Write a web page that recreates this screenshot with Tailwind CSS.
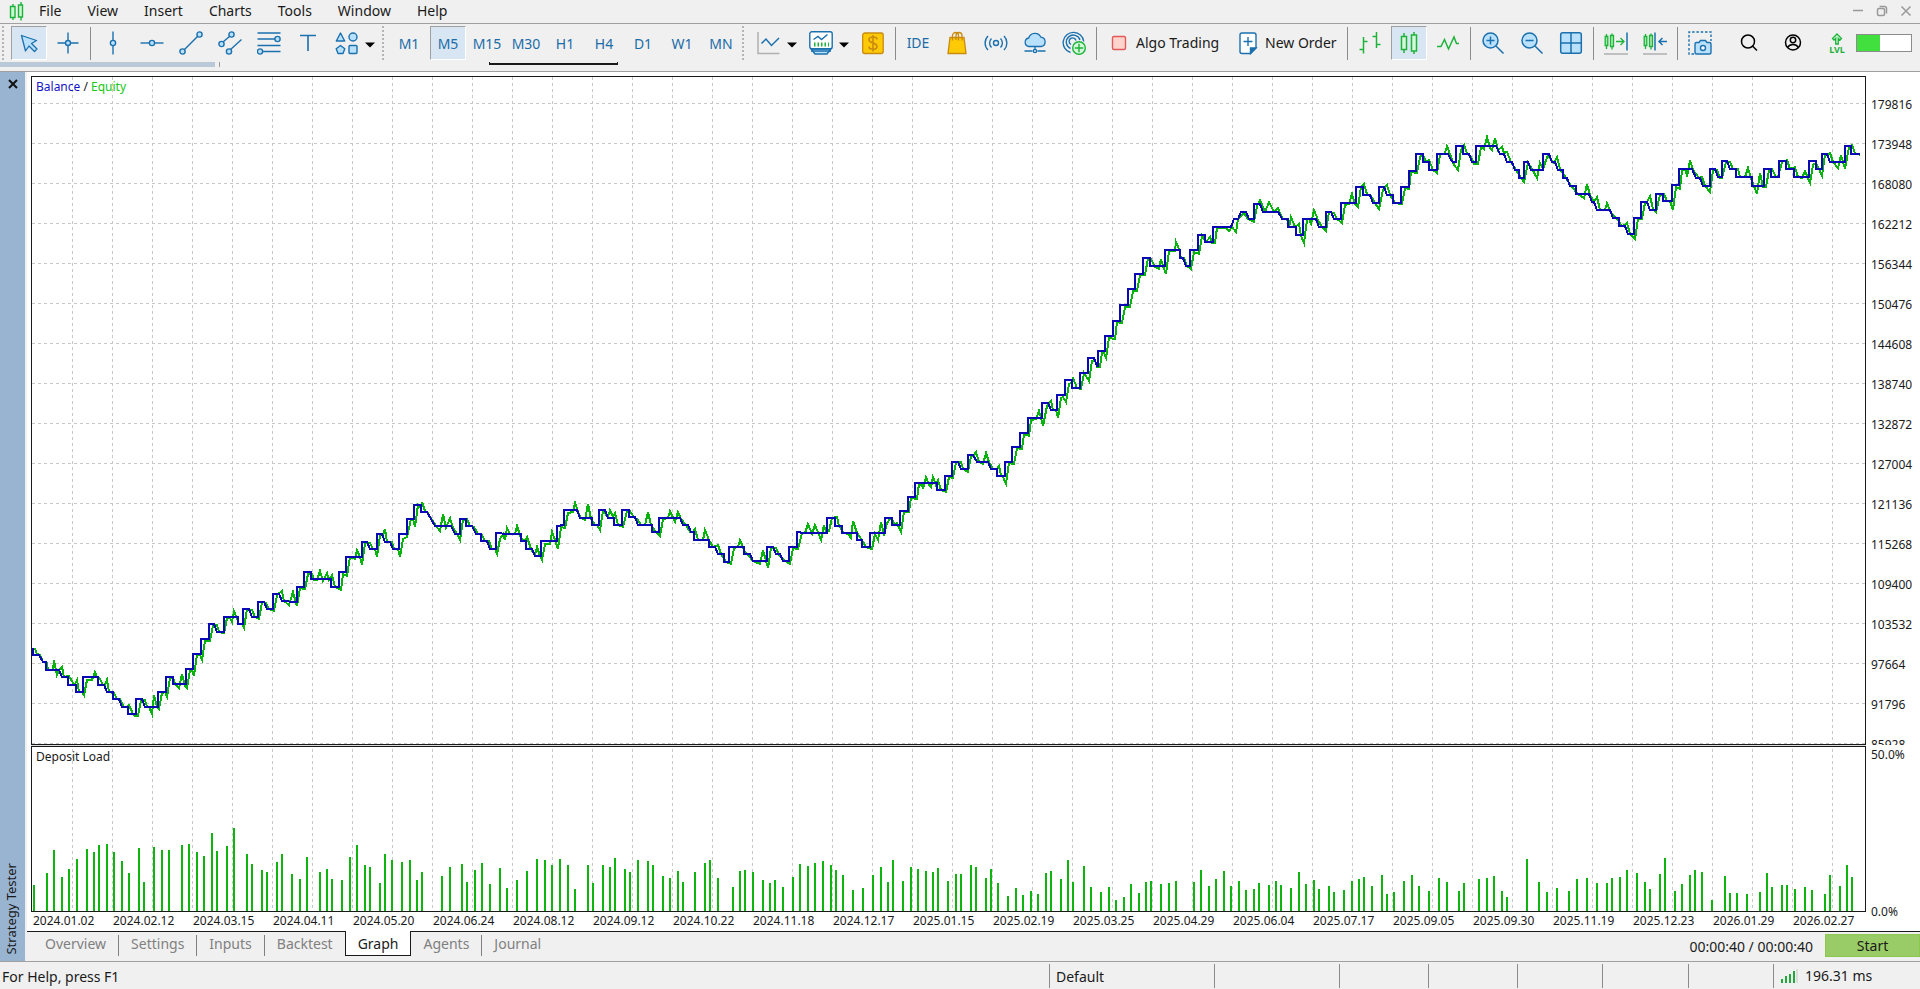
<!DOCTYPE html>
<html lang="en">
<head>
  <meta charset="UTF-8">
  <meta name="viewport" content="width=device-width, initial-scale=1.0" />
  <title>Strategy Tester</title>
  <script src="https://cdn.jsdelivr.net/npm/@tailwindcss/browser@4"></script>
</head>
<body class="bg-[#f0f0f0] text-[#1a1a1a] font-['Noto_Sans','Open_Sans',sans-serif] text-sm flex flex-col h-screen overflow-hidden">

  <!-- Menu bar -->
  <header class="flex items-center h-[23px] shrink-0">
    <svg class="w-4 h-5 ml-2 mr-[2px]" viewBox="0 0 16 20" fill="#c9f7cf" stroke="#1db33a" stroke-width="1.4"><path d="M5 2v16M13 0v18.5"/><path d="M2.5 4.5h4.5v11h-4.5zM10.5 3h4v12h-4z"/></svg>
    <nav class="flex h-full items-center leading-5 pb-[2px]">
      <button class="px-[13px]">File</button>
      <button class="px-[13px]">View</button>
      <button class="px-[13px]">Insert</button>
      <button class="px-[13px]">Charts</button>
      <button class="px-[13px]">Tools</button>
      <button class="px-[13px]">Window</button>
      <button class="px-[13px]">Help</button>
    </nav>
    <div class="ml-auto mr-1.5 pb-[2px] flex gap-2 text-[#999]">
      <button aria-label="Minimize"><svg class="w-4 h-4" viewBox="0 0 16 16" stroke="currentColor" stroke-width="1.5"><path d="M3 7.500h10"/></svg></button>
      <button aria-label="Restore"><svg class="w-4 h-4" viewBox="0 0 16 16" fill="none" stroke="currentColor" stroke-width="1.5"><rect x="3.5" y="5.5" width="7" height="7" rx="1.5"/><path d="M5.5 3.5h5a2 2 0 0 1 2 2v5"/></svg></button>
      <button aria-label="Close"><svg class="w-4 h-4" viewBox="0 0 16 16" stroke="currentColor" stroke-width="1.5"><path d="M3.5 3.5l9 9M12.5 3.5l-9 9"/></svg></button>
    </div>
  </header>

  <!-- Toolbar -->
  <div class="border-y border-[#a0a0a0] h-[49px] shrink-0 flex flex-col">
    <div class="flex items-center gap-[3px] pl-[2px] pr-2 pt-[2px] text-[#1c6ca8]">
      <div class="w-1.5 h-[34px] border-l-2 border-dotted border-[#b5b5b5]"></div>

      <button aria-label="Cursor" class="w-9 h-[34px] grid place-items-center bg-[#d8e6f3] border border-t-[#a0a0a0] border-l-[#a0a0a0] border-white"><svg class="w-6 h-6" viewBox="0 0 24 24" fill="#b9e1fd" stroke="#1b70ae" stroke-width="1.3" stroke-linejoin="round"><path d="M4.5 4.5l15 5-5 3 5.5 5.5-2.5 2.5-5.5-5.5-3.5 5z"/></svg></button>
      <button aria-label="Crosshair" class="w-9 h-[34px] grid place-items-center"><svg class="w-6 h-6" viewBox="0 0 24 24" fill="#b9e1fd" stroke="#1b70ae" stroke-width="1.4"><path d="M1.5 12h7.5M15 12h7.5M12 1.5v7.5M12 15v7.5"/><circle cx="12" cy="12" r="2.5"/></svg></button>
      <div class="w-[3px] h-[33px] flex justify-center"><div class="w-px bg-[#8c8c8c]"></div></div>
      <button aria-label="Vertical line" class="w-9 h-[34px] grid place-items-center"><svg class="w-6 h-6" viewBox="0 0 24 24" fill="#b9e1fd" stroke="#1b70ae" stroke-width="1.4"><path d="M12 .5v23"/><circle cx="12" cy="12" r="2.6"/></svg></button>
      <button aria-label="Horizontal line" class="w-9 h-[34px] grid place-items-center"><svg class="w-6 h-6" viewBox="0 0 24 24" fill="#b9e1fd" stroke="#1b70ae" stroke-width="1.4"><path d="M.5 12h23"/><circle cx="12" cy="12" r="2.6"/></svg></button>
      <button aria-label="Trend line" class="w-9 h-[34px] grid place-items-center"><svg class="w-6 h-6" viewBox="0 0 24 24" fill="#b9e1fd" stroke="#1b70ae" stroke-width="1.4"><path d="M5 19L19 5"/><circle cx="3.5" cy="20.5" r="2.6"/><circle cx="20.5" cy="3.5" r="2.6"/></svg></button>
      <button aria-label="Channel" class="w-9 h-[34px] grid place-items-center"><svg class="w-6 h-6" viewBox="0 0 24 24" fill="#b9e1fd" stroke="#1b70ae" stroke-width="1.4"><path d="M5 11l7-6M12 19L23.5 8.5"/><circle cx="3.5" cy="13" r="2.6"/><circle cx="13.5" cy="3.5" r="2.6"/><circle cx="11" cy="20.5" r="2.6"/></svg></button>
      <button aria-label="Fibonacci" class="w-9 h-[34px] grid place-items-center"><svg class="w-6 h-6" viewBox="0 0 24 24" fill="#b9e1fd" stroke="#1b70ae" stroke-width="1.4"><path d="M.5 2h23M.5 8h18M.5 14.5h23M5 20.5h18.5"/><circle cx="20.5" cy="8" r="2.6"/><circle cx="3" cy="20.5" r="2.6"/></svg></button>
      <button aria-label="Text" class="w-9 h-[34px] grid place-items-center"><svg class="w-6 h-6" viewBox="0 0 24 24" fill="none" stroke="#1b70ae" stroke-width="1.6"><path d="M4 4.5h16M12 4.5V20"/></svg></button>
      <button aria-label="Shapes" class="w-[50px] h-[34px] flex items-center gap-1.5 pl-1.5"><svg class="w-6 h-6" viewBox="0 0 24 24" fill="#b9e1fd" stroke="#1b70ae" stroke-width="1.4" stroke-linejoin="round"><path d="M5.5 2l4.2 8H1.3z"/><circle cx="18" cy="6" r="4"/><path d="M5.5 14.5l4.3 3.3-1.8 4.700H3l-1.800-4.700z"/><rect x="14" y="14.5" width="8" height="8" rx="1"/></svg><svg class="w-[10px] h-[10px] mt-1" viewBox="0 0 10 10" fill="#000"><path d="M0 2.500h10L5 7.500z"/></svg></button>
      <div class="w-1.5 h-[34px] border-l-2 border-dotted border-[#b5b5b5]"></div>

      <!-- Timeframes -->
      <button class="w-9 h-[34px] pt-[2px]">M1</button>
      <button class="w-9 h-[34px] pt-[2px] bg-[#d8e6f3] border border-t-[#a0a0a0] border-l-[#a0a0a0] border-white">M5</button>
      <button class="w-9 h-[34px] pt-[2px]">M15</button>
      <button class="w-9 h-[34px] pt-[2px]">M30</button>
      <button class="w-9 h-[34px] pt-[2px]">H1</button>
      <button class="w-9 h-[34px] pt-[2px]">H4</button>
      <button class="w-9 h-[34px] pt-[2px]">D1</button>
      <button class="w-9 h-[34px] pt-[2px]">W1</button>
      <button class="w-9 h-[34px] pt-[2px]">MN</button>
      <div class="w-1.5 h-[34px] border-l-2 border-dotted border-[#b5b5b5]"></div>

      <button aria-label="Chart type" class="w-[49px] h-[34px] flex items-center gap-1.5 pl-1.5"><svg class="w-6 h-6" viewBox="0 0 24 24" fill="none" stroke-width="1.5"><path stroke="#b0b0b0" d="M1 1v21.5h21.5"/><path stroke="#1b70ae" d="M4.5 12.5l4.5-4.5 5.5 6.500 7.500-7.500"/></svg><svg class="w-[10px] h-[10px] mt-1" viewBox="0 0 10 10" fill="#000"><path d="M0 2.500h10L5 7.500z"/></svg></button>
      <button aria-label="Indicators" class="w-[49px] h-[34px] flex items-center gap-1.5 pl-1.5"><svg class="w-6 h-6" viewBox="0 0 24 24" fill="none" stroke="#1b70ae" stroke-width="1.4"><path fill="#b9e1fd" d="M2 18h20l-4 5H6z"/><rect x=".8" y=".8" width="22.4" height="17" rx="2" fill="#fff"/><path d="M2 20h20M4.5 8.5L9 5.5l3.5 3 6-5"/><path stroke="#1db33a" stroke-dasharray="1.5 2" stroke-width="4" d="M5 13.500h15"/></svg><svg class="w-[10px] h-[10px] mt-1" viewBox="0 0 10 10" fill="#000"><path d="M0 2.500h10L5 7.500z"/></svg></button>
      <button aria-label="Deposit" class="w-9 h-[34px] grid place-items-center"><svg class="w-6 h-6" viewBox="0 0 24 24" fill="none" stroke="#c98a10" stroke-width="1.3"><rect x="1.7" y="2" width="20.5" height="20.5" rx="2" fill="#fdca05"/><path stroke-width="1.6" d="M16 8.5c0-1.500-1.700-2.500-4-2.500s-4 1-4 2.800c0 4 8 2.600 8 6.600 0 1.800-1.700 2.800-4 2.800s-4-1-4-2.700M12 4v16.500"/></svg></button>
      <div class="w-[3px] h-[33px] flex justify-center"><div class="w-px bg-[#8c8c8c]"></div></div>

      <button class="w-9 h-[34px]">IDE</button>
      <button aria-label="Market" class="w-9 h-[34px] grid place-items-center"><svg class="w-6 h-6" viewBox="0 0 24 24" fill="#fdca05" stroke="#c98a10" stroke-width="1.3"><path d="M5 6.500h14l2 16H3z"/><path fill="none" d="M7.500 9.500V4.500a3 3 0 0 1 6 0v5M11 9V4.500a3 3 0 0 1 6 0v5"/></svg></button>
      <button aria-label="Signals" class="w-9 h-[34px] grid place-items-center"><svg class="w-6 h-6" viewBox="0 0 24 24" fill="none" stroke="#1b70ae" stroke-width="1.4"><circle cx="12" cy="12" r="2.5"/><path d="M7.500 7.500a6.300 6.300 0 0 0 0 9M16.500 7.500a6.300 6.300 0 0 1 0 9M4 5a9.900 9.900 0 0 0 0 14M20 5a9.900 9.900 0 0 1 0 14"/></svg></button>
      <button aria-label="VPS" class="w-9 h-[34px] grid place-items-center"><svg class="w-6 h-6" viewBox="0 0 24 24" fill="#b9e1fd" stroke="#1b70ae" stroke-width="1.3"><path d="M6 15.500a4.300 4.300 0 0 1-.3-8.500 6.500 6.500 0 0 1 12.200-.8 4.700 4.700 0 0 1 .3 9.300zM12 15.500v3M1.500 20h8M14.500 20h8"/><circle cx="12" cy="20" r="1.7"/></svg></button>
      <button aria-label="Community" class="w-9 h-[34px] grid place-items-center"><svg class="w-6 h-6" viewBox="0 0 24 24" fill="none" stroke="#1b70ae" stroke-width="1.4"><path d="M8.500 21.500a10.300 10.300 0 1 1 13.200-11M8.500 17.500a7 7 0 1 1 9.500-8.500M9 13.500a3.500 3.500 0 1 1 5-4"/><circle cx="17" cy="17" r="6.3" fill="#d3f9d8" stroke="#1db33a"/><path stroke="#1db33a" d="M17 12.800v8.400M12.800 17h8.400"/></svg></button>
      <div class="w-[3px] h-[33px] flex justify-center"><div class="w-px bg-[#8c8c8c]"></div></div>

      <button class="w-[127px] h-[34px] flex items-center gap-[5px] pl-1.5 text-[#1a1a1a] whitespace-nowrap"><svg class="w-6 h-6" viewBox="0 0 24 24"><rect x="5.5" y="5.5" width="13" height="13" rx="1.5" fill="#ffd4cc" stroke="#e05a5a" stroke-width="1.4"/></svg>Algo Trading</button>
      <button class="w-[112px] h-[34px] flex items-center gap-[5px] pl-[5px] text-[#1a1a1a] whitespace-nowrap"><svg class="w-6 h-6" viewBox="0 0 24 24" fill="none" stroke="#1b70ae" stroke-width="1.4"><path fill="#fff" d="M6 2h12a2 2 0 0 1 2 2v13l-5.500 5.500H6a2 2 0 0 1-2-2V4a2 2 0 0 1 2-2z"/><path fill="#1b70ae" d="M20 17h-5.500v5.500z"/><path d="M12 6v9M7.500 10.500h9"/></svg>New Order</button>
      <div class="w-[3px] h-[33px] flex justify-center"><div class="w-px bg-[#8c8c8c]"></div></div>

      <button aria-label="Bars" class="w-9 h-[34px] grid place-items-center"><svg class="w-6 h-6" viewBox="0 0 24 24" fill="none" stroke="#1db33a" stroke-width="1.5"><path d="M5.500 6v16.500M1.500 18.500h4M5.500 10.500h4M18.500 1v16M14.500 5.500h4M18.500 13.500h4"/></svg></button>
      <button aria-label="Candles" class="w-9 h-[34px] grid place-items-center bg-[#d8e6f3] border border-t-[#a0a0a0] border-l-[#a0a0a0] border-white"><svg class="w-6 h-6" viewBox="0 0 24 24" fill="#d3f9d8" stroke="#1db33a" stroke-width="1.5"><path d="M7 2v20M17 1v22"/><path d="M4.500 5.500h5v13h-5zM14.500 4h5v16h-5z"/></svg></button>
      <button aria-label="Line" class="w-9 h-[34px] grid place-items-center"><svg class="w-6 h-6" viewBox="0 0 24 24" fill="none" stroke="#1db33a" stroke-width="1.5"><path d="M1 15.500h4l3.500-7 4 9.500 5.500-12 2.500 6.500h2.500"/></svg></button>
      <div class="w-[3px] h-[33px] flex justify-center"><div class="w-px bg-[#8c8c8c]"></div></div>

      <button aria-label="Zoom in" class="w-9 h-[34px] grid place-items-center"><svg class="w-6 h-6" viewBox="0 0 24 24" fill="#b9e1fd" stroke="#1b70ae" stroke-width="1.5"><circle cx="9.5" cy="9.5" r="7.5"/><path d="M15 15l7.500 7.500M9.500 5.500v8M5.500 9.500h8"/></svg></button>
      <button aria-label="Zoom out" class="w-9 h-[34px] grid place-items-center"><svg class="w-6 h-6" viewBox="0 0 24 24" fill="#b9e1fd" stroke="#1b70ae" stroke-width="1.5"><circle cx="9.5" cy="9.5" r="7.5"/><path d="M15 15l7.500 7.500M5.500 9.500h8"/></svg></button>
      <button aria-label="Tile windows" class="w-9 h-[34px] grid place-items-center"><svg class="w-6 h-6" viewBox="0 0 24 24" fill="#b9e1fd" stroke="#1b70ae" stroke-width="1.5"><rect x="1.7" y="1.7" width="20.6" height="20.6" rx="2"/><path d="M12 2v20.500M2 12h20.500"/></svg></button>
      <div class="w-[3px] h-[33px] flex justify-center"><div class="w-px bg-[#8c8c8c]"></div></div>

      <button aria-label="Chart shift" class="w-9 h-[34px] grid place-items-center"><svg class="w-6 h-6" viewBox="0 0 24 24" fill="#9feaa9" stroke="#1db33a" stroke-width="1.3"><path d="M2.500 3v15M8 2.500v16"/><path d="M1.200 5.500h2.600v9H1.200zM6.500 4.500h3v11h-3z"/><path fill="none" d="M12 10.500h8M16.500 7l3.500 3.500-3.500 3.500"/><path stroke="#1b70ae" stroke-width="1.5" d="M23 1.500v18"/><path stroke="#a5a5a5" d="M0 23h24"/></svg></button>
      <button aria-label="Auto scroll" class="w-9 h-[34px] grid place-items-center"><svg class="w-6 h-6" viewBox="0 0 24 24" fill="#9feaa9" stroke="#1db33a" stroke-width="1.3"><path d="M2.500 3v15M8 2.500v16"/><path d="M1.200 5.500h2.600v9H1.200zM6.500 4.500h3v11h-3z"/><path fill="none" stroke="#1b70ae" stroke-width="1.5" d="M12 1.500v18M24 10.500h-8M19.500 7L16 10.500l3.500 3.500"/><path stroke="#a5a5a5" d="M0 23h24"/></svg></button>
      <div class="w-[3px] h-[33px] flex justify-center"><div class="w-px bg-[#8c8c8c]"></div></div>
      <button aria-label="Screenshot" class="w-9 h-[34px] grid place-items-center"><svg class="w-6 h-6" viewBox="0 0 24 24" fill="none" stroke="#1b70ae" stroke-width="1.4"><path stroke-dasharray="2.5 1.8" d="M6 23H1V1h22v9"/><path fill="#b9e1fd" d="M7 13a1.500 1.500 0 0 1 1.500-1.500H11l1.500-2h5l1.500 2h2.500A1.500 1.500 0 0 1 23 13v8.500a1.500 1.500 0 0 1-1.500 1.500h-13A1.500 1.500 0 0 1 7 21.500z"/><circle cx="15" cy="17" r="2.5" fill="#fff"/></svg></button>

      <div class="ml-auto flex items-center gap-2 text-black">
        <button aria-label="Search" class="w-9 h-[34px] grid place-items-center"><svg class="w-6 h-6" viewBox="0 0 24 24" fill="none" stroke="currentColor" stroke-width="1.5"><circle cx="11" cy="10.5" r="6.5"/><path d="M15.500 15l4.500 4.500"/></svg></button>
        <button aria-label="Account" class="w-9 h-[34px] grid place-items-center"><svg class="w-6 h-6" viewBox="0 0 24 24" fill="none" stroke="currentColor" stroke-width="1.5"><circle cx="12" cy="11.5" r="7.5"/><circle cx="12" cy="9" r="2.7"/><path d="M6.500 16.500c1.200-2 3-3 5.500-3s4.300 1 5.500 3"/></svg></button>
        <div class="flex items-center gap-px">
          <button aria-label="Level" class="w-9 h-[34px] flex flex-col items-center justify-center text-[#1db33a] text-[9px] leading-[9px] font-bold"><svg class="w-3 h-3" viewBox="0 0 12 12" fill="#c9f7cf" stroke="currentColor" stroke-width="1.3"><path d="M6 1l4.500 4.500L9 7 7.300 5.500V11H4.700V5.500L3 7 1.500 5.500z"/></svg>LVL</button>
          <div class="w-14 h-[18px] border border-[#8c8c8c] bg-white"><div class="h-full bg-[#41e03f]" style="width: 42%"></div></div>
        </div>
      </div>
    </div>
    <!-- Docked bar edges under the toolbar -->
    <div class="flex h-[5px] mt-[2px]">
      <div class="w-[215px] bg-[#bac9d8]"></div>
      <div class="ml-1 w-px bg-[#999]"></div>
      <div class="ml-[269px] w-[129px] h-[3px] border-b-2 border-x border-[#1a1a1a]"></div>
    </div>
  </div>

  <!-- Strategy tester -->
  <main class="flex flex-1 min-h-0">
    <aside class="w-[25px] shrink-0 bg-[#99b4d1] flex flex-col items-center justify-between pt-1.5 pb-1.5">
      <button aria-label="Close panel"><svg class="w-3 h-3" viewBox="0 0 12 12" stroke="#111" stroke-width="2"><path d="M2 2l8 8M10 2l-8 8"/></svg></button>
      <span class="[writing-mode:vertical-rl] rotate-180 text-[13px] leading-5 mr-1">Strategy Tester</span>
    </aside>

    <section class="flex-1 min-w-0 ml-[2px] flex flex-col">
      <div class="flex-1 min-h-0 bg-white pt-1 pl-1 flex flex-col">
        <div class="flex flex-[669] min-h-0">
          <div class="relative flex-1 border border-[#1a1a1a] min-w-0">
            <svg class="block w-full h-full" viewBox="32 77 1833 667" preserveAspectRatio="none" fill="none" shape-rendering="crispEdges">
              <g id="grid-top" stroke="#c8c8c8" stroke-dasharray="3 3"></g>
              <polyline id="equity" stroke="#06b40c" stroke-width="2"/>
              <polyline id="balance" stroke="#0a0ab4" stroke-width="2"/>
            </svg>
            <div class="absolute left-1 top-0 text-xs leading-5"><span class="text-[#1414c8]">Balance</span> / <span class="text-[#14c814]">Equity</span></div>
          </div>
          <div id="prices" class="w-[54px] pt-[9px] pl-[5px] text-xs overflow-hidden"></div>
        </div>
        <div class="flex h-px"><div class="flex-1 bg-[#dcdcdc]"></div><div class="w-[54px]"></div></div>
        <div class="flex flex-[166] min-h-0">
          <div class="relative flex-1 border border-[#1a1a1a] min-w-0">
            <svg class="block w-full h-full" viewBox="32 747 1833 164" preserveAspectRatio="none" fill="none" shape-rendering="crispEdges">
              <g id="grid-bottom" stroke="#c8c8c8" stroke-dasharray="3 3"></g>
              <path id="load" stroke="#0cb60c" stroke-width="2"/>
            </svg>
            <div class="absolute left-1 top-0 text-xs leading-5">Deposit Load</div>
          </div>
          <div class="w-[54px] pl-[5px] pt-px flex flex-col justify-between text-xs leading-4">
            <span>50.0%</span>
            <span class="-mb-2">0.0%</span>
          </div>
        </div>
        <div id="dates" class="flex h-[19px] shrink-0 mr-[54px] pl-[2px] text-xs leading-[18px] overflow-hidden"></div>
      </div>

      <div class="flex h-[30px] shrink-0 border-t border-[#1a1a1a] text-[#808080]">
        <nav class="flex items-start pl-1.5 -mt-px">
          <a href="#" class="px-3 mt-1 h-[21px] leading-[18px] border-r border-[#808080]">Overview</a>
          <a href="#" class="px-3 mt-1 h-[21px] leading-[18px] border-r border-[#808080]">Settings</a>
          <a href="#" class="px-3 mt-1 h-[21px] leading-[18px] border-r border-[#808080]">Inputs</a>
          <a href="#" class="px-3 mt-1 h-[21px] leading-[18px]">Backtest</a>
          <a href="#" class="px-3 pt-1 h-[25px] leading-[18px] bg-white border border-t-0 border-[#1a1a1a] text-[#1a1a1a]">Graph</a>
          <a href="#" class="px-3 mt-1 h-[21px] leading-[18px] border-r border-[#808080]">Agents</a>
          <a href="#" class="px-3 mt-1 h-[21px] leading-[18px]">Journal</a>
        </nav>
        <div class="ml-auto flex items-center gap-3 text-[#1a1a1a]">
          <span>00:00:40 / 00:00:40</span>
          <button class="w-[95px] h-[23px] mb-[2px] bg-[#99cc66] border border-[#8cc850] leading-5">Start</button>
        </div>
      </div>
    </section>
  </main>

  <!-- Status bar -->
  <footer class="flex h-7 shrink-0 border-t border-[#a0a0a0] pt-[2px] pb-px leading-[26px]">
    <div class="flex-1 pl-[2px]">For Help, press F1</div>
    <div class="w-[165px] border-l border-[#8c8c8c] pl-1.5">Default</div>
    <div class="w-[125px] border-l border-[#8c8c8c]"></div>
    <div class="w-[89px] border-l border-[#8c8c8c]"></div>
    <div class="w-[89px] border-l border-[#8c8c8c]"></div>
    <div class="w-[85px] border-l border-[#8c8c8c]"></div>
    <div class="w-[86px] border-l border-[#8c8c8c]"></div>
    <div class="w-[85px] border-l border-[#8c8c8c]"></div>
    <div class="w-[147px] border-l border-[#8c8c8c] pl-1.5 flex items-center gap-[7px]">
      <svg class="w-[18px] h-4" viewBox="0 0 18 16" stroke="#1fa83c" stroke-width="2"><path d="M2 15v-4M6 15V8M10 15V6M14 15V3"/><path stroke="#dcdcdc" d="M17 15V1"/></svg>
      196.31 ms
    </div>
  </footer>

  <script>
    // Curve pieces: each one has its origin and the number of units per pixel
    const balance = [
      { x: 30, y: 480, ux: 3, uy: 3, pts: "5,507 12,525 26,525 38,546 44,546 52,570 88,570 97,591 112,591 118,615 134,615 142,637 157,637 163,591 200,591 208,615 222,615 232,637 246,637 252,657 268,657 277,681 292,681 298,702 314,702 322,657 337,657 344,681 382,681 388,637 404,637 412,591 427,591 433,612 464,612 472,567 487,567 493,522 509,522 517,477 533,477 538,432 553,432 562,456 578,456 584,411 620,411 628,432 637,432 643,387 657,387 667,411 682,411 688,366 703,366 712,387 727,387 733,342 748,342 757,364 797,366 802,321 817,321 826,276 841,276 847,297 901,297 907,321 922,321 931,276 946,276 952,231 992,231 998,186 1012,186 1021,207 1036,207 1043,162 1057,162 1066,186 1080,186 1088,207 1103,207 1111,162 1126,162 1133,117 1146,117 1157,75 1171,75 1177,96 1190,96 1216,138 1264,138 1276,162 1284,162 1292,117 1306,117 1312,138 1326,138 1337,162 1347,162" },
      { x: 480, y: 460, ux: 3, uy: 3, pts: "0,222 6,243 22,243 31,267 46,267 52,219 64,219 68,222 121,222 126,243 136,243 141,267 156,267 165,288 181,288 187,243 226,243 235,198 250,195 256,150 292,150 300,175 332,175 340,195 355,195 361,150 375,150 384,175 398,175 405,195 421,195 430,150 444,150 450,171 466,172 475,195 512,195 519,216 534,216 541,175 601,175 609,195 625,195 632,216 640,216 646,240 684,240 691,261 706,261 714,283 729,283 736,306 745,306 750,261 788,261 795,282 810,282 819,303 857,303 865,261 880,261 888,282 901,282 909,303 925,303 931,261 946,261 955,216 970,219 1039,219 1045,175 1061,175 1068,198 1084,198 1090,219 1127,219 1135,240 1143,240 1150,261 1166,261 1173,219 1210,219 1218,175 1233,175 1240,195 1256,195 1264,153 1280,153 1286,111 1300,111 1309,69 1368,69 1375,90 1390,90" },
      { x: 900, y: 230, ux: 3, uy: 3, pts: "138,738 154,738 160,696 175,696 183,717 200,717 206,675 220,675 230,696 265,696 274,717 289,717 295,738 310,738 319,696 334,696 340,651 355,651 363,609 380,609 385,564 424,564 430,519 445,519 453,540 469,540 475,495 491,495 499,450 513,450 520,474 538,474 544,429 559,429 567,384 582,384 590,408 598,363 612,363 619,318 634,318 643,273 657,273 664,225 680,225 688,177 703,177 709,132 724,132 733,84 747,84 754,108 792,108 799,60 837,60 844,84 850,84 858,108 868,108 874,60 889,60 897,15 912,15 919,36 935,36" },
      { x: 0, y: 0, ux: 1, uy: 1, pts: "1214,227 1231,227 1234,219 1238,219 1241,212 1246,212 1249,219 1253,219 1255,204 1260,204 1263,212 1278,212" },
      { x: 1280, y: 110, ux: 2.45, uy: 3, pts: "0,315 4,327 16,327 22,351 36,351 42,375 52,375 59,327 88,327 95,351 108,351 115,306 126,306 132,327 146,327 153,279 182,279 190,231 202,231 206,255 220,255 227,279 238,279 245,231 256,231 263,255 274,255 280,279 293,279 300,231 313,231 318,183 330,183 336,132 347,132 353,156 362,156 367,180 379,180 386,132 412,132 420,150 424,156 429,156 434,108 446,108 452,132 462,132 470,156 476,156 484,108 530,108 538,132 549,132 556,156 568,156 575,180 582,180 587,204 594,204 600,156 608,156 614,180 642,180 648,132 658,132 666,156 674,156 680,180 690,180 696,204 702,204 710,228 722,228 728,252 756,252 764,276 770,276 777,300 808,300 815,324 827,324 834,348 846,348 852,372 863,372 870,324 882,324 887,276 899,276 906,300 919,300 924,252 936,252 942,273 956,273 962,225 974,225 981,177 1010,177 1018,204 1030,204 1036,228 1048,228 1055,177 1066,177 1074,201 1080,201 1084,153 1096,153 1102,177 1114,177 1120,201 1151,201 1158,228 1181,228 1189,177 1200,177 1206,201 1219,201 1226,153 1238,153 1243,177 1256,177 1262,201 1291,201 1299,153 1310,153 1316,177 1324,177 1330,132 1341,132 1348,156 1379,156 1386,108 1397,108 1402,132 1422,132" }
    ];
    const equity = [
      { x: 30, y: 480, ux: 3, uy: 3, pts: "5,507 14,507 20,522 30,525 40,546 50,548 55,570 68,570 73,540 82,585 88,570 96,560 102,591 118,588 128,610 136,612 142,600 148,637 155,637 162,645 170,600 186,600 194,575 200,591 210,597 218,615 224,615 232,600 238,637 252,640 262,657 270,657 282,681 292,681 298,675 308,702 316,708 323,708 332,660 344,660 350,681 358,681 367,702 373,645 380,681 388,687 396,640 404,637 411,650 420,594 430,595 436,612 447,624 456,582 464,618 472,624 480,570 487,570 493,587 502,525 510,525 516,540 524,483 540,483 548,435 560,435 566,456 583,460 592,414 600,414 607,426 613,393 628,432 636,432 643,444 652,388 666,390 676,411 688,417 697,366 708,370 718,387 733,393 742,346 757,333 762,362 778,375 788,336 797,370 802,378 811,324 826,328 834,282 846,282 852,300 862,300 871,272 880,303 892,280 898,300 907,285 914,321 932,330 940,282 952,288 961,231 976,236 982,210 990,231 997,254 1006,188 1020,188 1028,207 1036,207 1042,232 1050,165 1058,165 1066,147 1072,186 1086,186 1092,207 1103,207 1111,232 1120,178 1132,170 1142,118 1150,118 1156,141 1165,76 1172,84 1177,66 1184,92 1192,96 1218,138 1230,152 1238,102 1248,145 1260,114 1268,145 1282,162 1291,180 1300,120 1312,118 1320,138 1332,140 1345,162" },
      { x: 480, y: 460, ux: 3, uy: 3, pts: "6,225 14,243 26,243 36,267 46,267 52,283 60,237 70,222 76,240 82,204 90,222 105,222 112,198 122,235 136,243 142,231 152,267 165,285 172,261 180,288 187,300 195,252 210,252 217,216 226,240 235,267 242,200 256,204 265,160 280,156 286,130 300,172 315,180 325,133 334,178 345,195 352,195 360,210 370,153 384,170 391,150 398,172 406,160 414,195 430,202 440,152 450,152 458,168 474,180 484,195 495,195 505,156 514,195 526,214 541,228 550,178 564,174 571,153 585,186 595,156 604,178 618,195 630,216 640,216 646,207 655,240 668,240 676,210 688,240 700,261 714,255 722,283 738,306 752,312 762,264 775,261 781,240 795,276 805,284 820,303 840,312 850,270 865,324 874,264 888,265 898,284 914,303 930,312 940,264 955,267 965,220 976,219 985,192 996,222 1006,195 1023,240 1031,195 1039,216 1046,214 1056,174 1070,171 1078,197 1092,219 1105,222 1114,234 1120,183 1130,219 1145,240 1158,261 1175,267 1184,221 1194,240 1204,186 1213,222 1222,190 1234,175 1244,195 1252,190 1264,216 1273,156 1286,156" },
      { x: 900, y: 230, ux: 3, uy: 3, pts: "34,805 50,807 58,762 66,765 70,778 79,741 86,765 93,771 100,741 108,765 115,750 124,780 138,786 146,740 160,744 168,696 183,696 190,717 205,726 214,680 222,676 229,666 238,696 250,702 259,669 268,696 280,716 290,717 296,708 302,735 310,742 319,762 326,700 342,702 350,654 366,656 372,612 386,618 394,570 408,568 416,543 424,564 430,588 440,528 454,513 460,540 468,540 475,564 484,505 490,500 499,516 506,462 514,458 520,444 530,474 544,476 553,430 568,453 576,393 584,390 590,412 600,412 606,370 613,370 619,384 628,324 644,326 652,276 666,279 674,230 690,230 698,184 711,182 720,135 735,134 744,85 754,86 764,110 776,118 784,87 790,108 799,132 808,64 824,64 829,37 836,58 844,84 852,84 862,108 874,118 883,66 898,72 907,18 919,36 929,22 936,40 946,40 951,-5" },
      { x: 0, y: 0, ux: 1, uy: 1, pts: "1217,228 1226,228 1229,231 1232,227 1236,232 1238,219 1244,213 1248,219 1254,222 1257,206 1260,200 1265,212 1269,202 1274,212 1278,208" },
      { x: 1280, y: 110, ux: 2.45, uy: 3, pts: "0,309 8,327 16,327 22,354 27,320 36,351 47,342 52,378 60,400 66,330 72,328 76,342 84,300 92,330 104,351 113,362 121,306 133,308 140,327 152,338 159,285 170,282 177,252 183,282 190,290 198,232 207,222 214,252 222,258 232,279 243,298 252,240 262,225 270,255 282,279 298,282 306,235 316,236 322,186 336,188 342,140 350,136 357,156 366,150 374,180 384,190 392,135 404,130 410,108 416,132 426,165 435,180 444,120 451,105 458,130 468,140 476,162 484,162 492,112 500,118 508,80 514,115 520,120 526,84 534,120 544,112 550,130 557,126 565,156 578,180 590,204 598,216 608,158 618,178 630,205 636,160 644,178 650,160 656,136 664,150 672,160 679,141 686,178 700,205 714,228 730,252 744,264 753,222 760,255 770,276 777,262 785,300 796,300 802,279 812,308 826,327 838,348 846,345 851,340 858,372 870,387 878,326 888,326 895,280 900,276 907,258 914,298 922,306 930,255 942,252 948,273 956,273 962,300 970,232 980,237 986,180 994,180 998,201 1005,150 1012,180 1026,204 1033,200 1042,228 1054,246 1062,180 1070,180 1078,205 1084,205 1092,155 1102,155 1110,177 1122,178 1128,201 1140,201 1146,174 1154,205 1162,228 1169,252 1177,190 1184,230 1190,230 1197,180 1206,178 1214,201 1220,201 1230,156 1243,150 1250,177 1262,172 1270,201 1278,205 1286,182 1298,218 1306,165 1312,160 1320,178 1328,198 1336,136 1348,128 1354,155 1366,175 1374,136 1385,178 1394,110 1402,106 1408,130 1422,135" }
    ];
    // Deposit load bars: position and top of each bar
    const load = [
      { x: 0, y: 720, ux: 2.45, uy: 3, pts: "83,495 115,459 132,390 152,471 169,447 188,417 213,387 230,396 242,375 262,372 279,396 298,423 316,459 340,384 352,486 377,381 396,390 414,390 445,375 463,372 482,396 499,408 519,339 531,393 556,378 573,324 605,402 617,432 641,450 655,456 678,426 690,402 715,462 735,477 752,411 784,456 801,447 813,477 837,480 857,411 874,375 894,435 906,441 931,489 943,402 960,420 984,426 1004,420 1021,480 1033,456 1082,468 1102,441 1131,432 1144,486 1163,450 1180,429 1200,492 1225,444 1242,504 1266,480 1291,453 1315,417 1335,420 1352,435 1371,417 1391,435 1408,507 1440,435 1452,489 1477,435 1494,441 1506,414 1531,447 1543,456 1563,420" },
      { x: 640, y: 820, ux: 2.45, uy: 3, pts: "19,123 31,135 56,168 73,174 93,153 105,186 134,156 159,129 171,120 191,174 227,201 245,153 257,150 276,156 301,180 318,189 330,180 350,201 374,171 391,132 411,138 428,129 448,123 467,135 480,150 497,165 521,210 546,204 570,165 590,141 607,186 619,120 644,183 663,141 681,147 700,153 717,156 730,144 754,183 774,162 786,162 810,135 823,141 847,174 859,147 877,189 901,228 921,204 938,225 957,213 975,222 994,159 1006,153 1031,177 1048,120 1060,186 1087,138 1104,201 1129,216 1149,201 1166,240 1185,231 1202,192 1222,219 1239,186 1251,183 1276,192 1295,189 1313,183 1357,186 1374,150 1393,198 1411,177 1430,153 1447,198 1467,183 1484,210 1504,207 1516,189 1540,195 1558,183" },
      { x: 1280, y: 720, ux: 2.45, uy: 3, pts: "2,495 26,504 46,456 63,492 83,480 95,507 120,498 132,516 156,510 176,483 193,477 205,471 225,498 249,465 262,522 279,516 303,483 323,465 340,498 365,513 389,474 409,486 438,513 450,489 487,477 507,474 524,468 543,513 556,531 605,417 634,486 654,516 678,504 708,513 727,477 752,474 776,489 801,489 813,474 832,471 850,450 874,459 894,486 906,507 931,462 943,414 967,513 984,492 1004,465 1016,450 1033,456 1058,540 1090,468 1102,519 1119,519 1144,522 1176,516 1193,459 1205,501 1229,495 1242,495 1261,507 1286,501 1303,510 1335,522 1347,465 1371,498 1389,435 1401,471" }
    ];
    const dates = ["2024.01.02", "2024.02.12", "2024.03.15", "2024.04.11", "2024.05.20", "2024.06.24", "2024.08.12", "2024.09.12", "2024.10.22", "2024.11.18", "2024.12.17", "2025.01.15", "2025.02.19", "2025.03.25", "2025.04.29", "2025.06.04", "2025.07.17", "2025.09.05", "2025.09.30", "2025.11.19", "2025.12.23", "2026.01.29", "2026.02.27"];

    const toPoints = (pieces) => pieces.flatMap((p) => p.pts.split(" ").map((pt) => {
      const [a, b] = pt.split(",").map(Number);
      return [Math.round(p.x + a / p.ux), Math.round(p.y + b / p.uy)];
    }));

    // Balance jumps are drawn as straight risers
    const stepped = (points) => points.flatMap(([x, y], i) => {
      if (i === 0) return [[x, y]];
      const [px, py] = points[i - 1];
      if (Math.abs(y - py) < 3 * Math.abs(x - px)) return [[x, y]];
      const mid = Math.round((px + x) / 2);
      return [[mid, py], [mid, y], [x, y]];
    });

    document.getElementById("equity").setAttribute("points", toPoints(equity).join(" "));
    document.getElementById("balance").setAttribute("points", stepped(toPoints(balance)).join(" "));
    document.getElementById("load").setAttribute("d", toPoints(load).map(([x, y]) => `M${x} ${y}V911`).join(""));

    // Grid, one cell is 40 x 40
    let vertical = "";
    for (let x = 72.5; x < 1865; x += 40) vertical += `M${x} 77V911`;
    let horizontal = "";
    for (let y = 103.5; y < 744; y += 40) horizontal += `M32 ${y}H1865`;
    document.getElementById("grid-top").innerHTML = `<path d="${vertical}"/><path d="${horizontal}"/>`;
    document.getElementById("grid-bottom").innerHTML = `<path d="${vertical}"/>`;

    // Axis labels
    for (let i = 0; i < 17; i++) {
      document.getElementById("prices").insertAdjacentHTML("beforeend", `<div class="h-10 leading-10">${179816 - 5868 * i}</div>`);
    }
    dates.forEach((d, i) => {
      const grow = i < dates.length - 1 ? "flex-[80]" : "flex-[73]";
      document.getElementById("dates").insertAdjacentHTML("beforeend", `<div class="${grow} min-w-0 whitespace-nowrap">${d}</div>`);
    });
  </script>
</body>
</html>
